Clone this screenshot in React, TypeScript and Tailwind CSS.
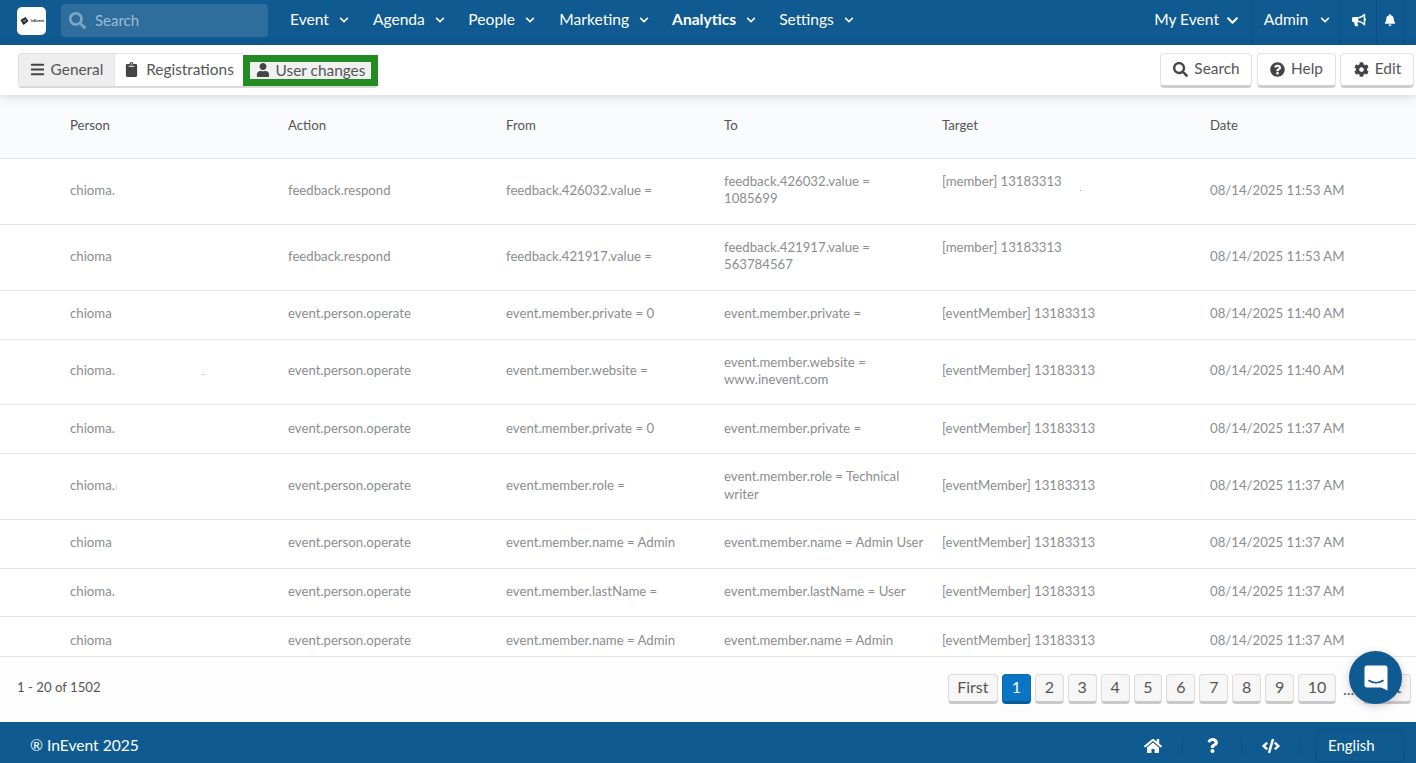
import { FaBars, FaBell, FaBullhorn, FaChevronDown, FaClipboard, FaCode, FaCog, FaHome, FaQuestion, FaQuestionCircle, FaSearch, FaUser } from "react-icons/fa";

const nav = [
  { label: "Event", ml: "ml-[22px]" },
  { label: "Agenda", ml: "ml-[24px]" },
  { label: "People", ml: "ml-[23.5px]" },
  { label: "Marketing", ml: "ml-[24.3px]" },
  { label: "Analytics", ml: "ml-[23px]", bold: true },
  { label: "Settings", ml: "ml-[23px]" },
];

const rows = [
  { p: "chioma.", a: "feedback.respond", f: "feedback.426032.value =", t: "feedback.426032.value =\n1085699", g: "[member] 13183313", top: true, d: "08/14/2025 11:53 AM", speck: true },
  { p: "chioma", a: "feedback.respond", f: "feedback.421917.value =", t: "feedback.421917.value =\n563784567", g: "[member] 13183313", top: true, d: "08/14/2025 11:53 AM" },
  { p: "chioma", a: "event.person.operate", f: "event.member.private = 0", t: "event.member.private =", g: "[eventMember] 13183313", d: "08/14/2025 11:40 AM" },
  { p: "chioma.", a: "event.person.operate", f: "event.member.website =", t: "event.member.website =\nwww.inevent.com", g: "[eventMember] 13183313", d: "08/14/2025 11:40 AM", dot: true },
  { p: "chioma.", a: "event.person.operate", f: "event.member.private = 0", t: "event.member.private =", g: "[eventMember] 13183313", d: "08/14/2025 11:37 AM" },
  { p: "chioma.", a: "event.person.operate", f: "event.member.role =", t: "event.member.role = Technical\nwriter", g: "[eventMember] 13183313", d: "08/14/2025 11:37 AM", smear: true },
  { p: "chioma", a: "event.person.operate", f: "event.member.name = Admin", t: "event.member.name = Admin User", g: "[eventMember] 13183313", d: "08/14/2025 11:37 AM" },
  { p: "chioma.", a: "event.person.operate", f: "event.member.lastName =", t: "event.member.lastName = User", g: "[eventMember] 13183313", d: "08/14/2025 11:37 AM" },
  { p: "chioma", a: "event.person.operate", f: "event.member.name = Admin", t: "event.member.name = Admin", g: "[eventMember] 13183313", d: "08/14/2025 11:37 AM" },
];

const gridCols = "grid grid-cols-[288px_218px_218px_218px_268px_1fr] pl-0";

function Row({ r }: { r: (typeof rows)[number] }) {
  return (
    <div className={`${gridCols} items-center border-b border-[#e3e5e6] pt-[14.25px] pb-[16.25px] text-[13.2px] leading-[17.2px] text-[#8b8d8f]`}>
      <div className="pl-[70px]">
        {r.p}
        {r.dot && <span className="ml-[88px] inline-block h-[1px] w-[1px] bg-[#9aa5ad]" />}
        {r.smear && <span className="ml-[1px] inline-block h-[6px] w-[1px] bg-[#d5dde2]" />}
      </div>
      <div>{r.a}</div>
      <div>{r.f}</div>
      <div className="whitespace-pre-line">{r.t}</div>
      <div>
        {r.g}
        {r.top && (
          <div className="h-[17.2px]">
            {r.speck && <span className="ml-[138px] inline-block h-[1px] w-[1px] bg-[#9aa5ad] align-top" />}
          </div>
        )}
      </div>
      <div>{r.d}</div>
    </div>
  );
}

function PageBtn({ label, active, w }: { label: string; active?: boolean; w: string }) {
  return (
    <button
      className={`flex h-[30px] items-center justify-center rounded-[4px] border border-b-[3px] pb-[2px] text-[16px] ${w} ${
        active ? "border-[#0a6ab0] border-b-[#075c9c] bg-[#0975c4] text-white" : "border-[#dcdcdc] border-b-[#c9c9c9] bg-[#f6f6f6] text-[#555]"
      }`}
    >
      {label}
    </button>
  );
}

function ToolBtn({ icon, label, w }: { icon: React.ReactNode; label: string; w: string }) {
  return (
    <button className={`flex h-[35px] items-center justify-center gap-[6px] rounded-[4px] border border-b-[3px] border-[#e2e2e2] border-b-[#cfcfcf] bg-white pb-[1px] pl-[1px] text-[15.4px] text-[#555] ${w}`}>
      <span className="text-[15px] text-[#444]">{icon}</span>
      {label}
    </button>
  );
}

export default function App() {
  return (
    <div className="relative flex h-[763px] w-[1416px] flex-col overflow-hidden bg-white font-['Lato','Noto_Sans',sans-serif]">
      <header className="flex h-[45px] shrink-0 items-center bg-[#0e5a91] pl-[17px] text-white">
        <div className="flex h-full items-center pb-[4px]">
          <div className="flex h-[28px] w-[29px] items-center justify-center gap-[1px] rounded-[5px] bg-white">
            <svg width="11" height="10" viewBox="0 0 10 10">
              <path d="M1 4 L6 1 L9 5 L4 9 Z" fill="#222" />
              <path d="M3 4.5 L6 3 L7 5 L4.5 6.5 Z" fill="#777" />
            </svg>
            <span className="text-[4px] font-bold leading-none text-[#222]">InEvent</span>
          </div>
          <div className="ml-[15px] flex h-[33px] w-[207px] items-center gap-[9px] rounded-[4px] bg-[#2f6d9d] pl-[8px] text-[15px] text-[#9dbdd5]">
            <FaSearch className="text-[17px] text-[#7ea7c5]" />
            Search
          </div>
          {nav.map((n) => (
            <div key={n.label} className={`flex items-center gap-[10px] pb-[1px] text-[15.6px] ${n.ml} ${n.bold ? "font-bold" : ""}`}>
              {n.label}
              <FaChevronDown className="text-[10px]" />
            </div>
          ))}
        </div>
        <div className="ml-auto flex h-full items-center">
          <div className="flex h-full items-center justify-end gap-[7px] whitespace-nowrap pb-[5px] pr-[13px] text-[15.6px]">
            My Event
            <FaChevronDown className="text-[13px]" />
          </div>
          <div className="flex h-full w-[88px] items-center justify-center gap-[12px] border-l border-[#0c5082] pb-[5px] pl-[1px] text-[15.6px]">
            Admin
            <FaChevronDown className="text-[10px]" />
          </div>
          <div className="flex h-full w-[36px] items-center justify-center border-l border-[#0c5082] pb-[6px]">
            <FaBullhorn className="text-[14px]" />
          </div>
          <div className="flex h-full w-[27px] items-center justify-center border-l border-[#0c5082] pb-[6px]">
            <FaBell className="text-[12px]" />
          </div>
          <div className="h-full w-[13px] border-l border-[#0c5082]" />
        </div>
      </header>

      <div className="z-10 flex h-[50px] shrink-0 items-start justify-between bg-white pl-[18px] pr-[2px] pt-[8px] shadow-[0_2px_10px_rgba(0,0,0,0.14)]">
        <div className="flex h-[35px] rounded-[4px] border-b-[2px] border-[#d9d9d9] text-[15.4px] text-[#555]">
          <div className="flex w-[96px] items-center justify-center gap-[6px] rounded-l-[4px] border border-r-0 border-b-0 border-[#dedede] bg-[#eeeeee] pb-[1px]">
            <FaBars className="text-[15px] text-[#444]" />
            General
          </div>
          <div className="flex w-[129px] items-center justify-center gap-[7px] border-y border-l border-b-0 border-[#e4e4e4] bg-white pb-[1px]">
            <FaClipboard className="text-[15px] text-[#444]" />
            Registrations
          </div>
          <div className="mt-[2px] h-[31px] w-[135px] border-[7px] border-[#228b22]">
            <div className="flex h-full items-center justify-center gap-[6px] bg-[#f1f1f1] pb-[1px] leading-[16px]">
              <FaUser className="text-[14px] text-[#444]" />
              User changes
            </div>
          </div>
        </div>
        <div className="flex gap-[4.5px]">
          <ToolBtn icon={<FaSearch />} label="Search" w="w-[92px]" />
          <ToolBtn icon={<FaQuestionCircle />} label="Help" w="w-[79px]" />
          <ToolBtn icon={<FaCog />} label="Edit" w="w-[74px]" />
        </div>
      </div>

      <div className={`${gridCols} h-[64px] shrink-0 items-center border-b border-[#e3e5e6] bg-[#f9fbfd] pb-[1px] text-[13.2px] text-[#555]`}>
        <div className="pl-[70px]">Person</div>
        <div>Action</div>
        <div>From</div>
        <div>To</div>
        <div>Target</div>
        <div>Date</div>
      </div>

      <div className="min-h-0 flex-1 overflow-hidden">
        {rows.map((r, i) => (
          <Row key={i} r={r} />
        ))}
      </div>

      <div className="flex h-[66px] shrink-0 items-start justify-between border-t border-[#e3e5e6] bg-[#fdfdfd] pl-[17px] pr-[5px] pt-[17px]">
        <div className="pt-[5px] text-[13.2px] leading-[17px] text-[#555]">1 - 20 of 1502</div>
        <div className="flex items-center gap-[4px]">
          <PageBtn label="First" w="w-[50px]" />
          <PageBtn label="1" active w="w-[29px]" />
          {["2", "3", "4", "5", "6", "7", "8", "9"].map((n) => (
            <PageBtn key={n} label={n} w="w-[28.9px]" />
          ))}
          <PageBtn label="10" w="w-[38px]" />
          <span className="w-[19px] pl-[3px] text-[16px] text-[#555]">...</span>
          <PageBtn label="Last" w="w-[48px]" />
        </div>
      </div>

      <footer className="flex h-[41px] shrink-0 items-center bg-[#0e5a91] pl-[30px] pr-[12px] pt-[6px] text-white">
        <span className="text-[15.6px]">® InEvent 2025</span>
        <div className="ml-auto flex items-center">
          <div className="flex h-[18px] w-[59px] items-center justify-center border-r border-[#0c5082]">
            <FaHome className="text-[18px]" />
          </div>
          <div className="flex h-[18px] w-[59px] items-center justify-center border-r border-[#0c5082]">
            <FaQuestion className="text-[15px]" />
          </div>
          <div className="flex h-[18px] w-[59px] items-center justify-center border-r border-[#0c5082]">
            <FaCode className="text-[18px]" />
          </div>
          <div className="ml-[15px] flex h-[33px] w-[88px] items-center rounded-[4px] border border-[#0c5082] pl-[11px] text-[15px]">English</div>
        </div>
      </footer>

      <div className="absolute left-[1349px] top-[651px] flex h-[53px] w-[53px] items-center justify-center rounded-full bg-[#0e5a91] shadow-[0_2px_8px_rgba(0,0,0,0.2)]">
        <svg width="24" height="28" viewBox="0 0 24 28">
          <path d="M3 1.5 H21 A2.5 2.5 0 0 1 23.5 4 V26.5 L17 23.5 H3 A2.5 2.5 0 0 1 0.5 21 V4 A2.5 2.5 0 0 1 3 1.5 Z" fill="#fff" />
          <path d="M5 16.5 C9 19.5 15 19.5 19 16.5" fill="none" stroke="#0e5a91" strokeWidth="1.6" strokeLinecap="round" />
        </svg>
      </div>
    </div>
  );
}
